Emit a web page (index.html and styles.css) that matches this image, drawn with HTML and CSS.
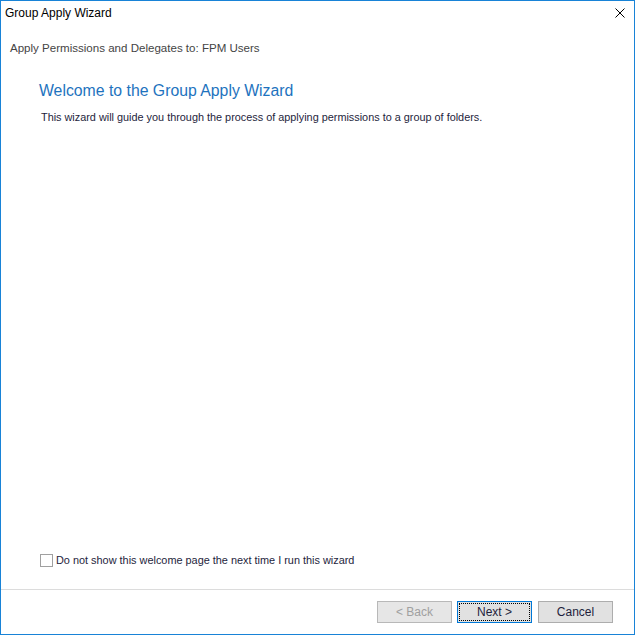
FILE: index.html
```html
<!DOCTYPE html>
<html>
<head>
<meta charset="utf-8">
<link rel="stylesheet" href="styles.css">
</head>
<body>
<div class="window">
  <div class="titlebar">
    <span class="title">Group Apply Wizard</span>
    <span class="close">
      <svg width="10" height="10" viewBox="0 0 10 10"><path d="M0.5 0.5 L9.5 9.5 M9.5 0.5 L0.5 9.5" stroke="#000" stroke-width="1" fill="none"/></svg>
    </span>
  </div>
  <div class="header">Apply Permissions and Delegates to: FPM Users</div>
  <div class="content">
    <h1 class="heading">Welcome to the Group Apply Wizard</h1>
    <p class="intro">This wizard will guide you through the process of applying permissions to a group of folders.</p>
    <label class="check"><span class="box"></span><span class="check-label">Do not show this welcome page the next time I run this wizard</span></label>
  </div>
  <div class="footer">
    <button class="btn disabled">&lt; Back</button>
    <button class="btn default"><span class="focus">Next &gt;</span></button>
    <button class="btn">Cancel</button>
  </div>
</div>
</body>
</html>
```
FILE: styles.css
```css
html, body {
  margin: 0;
  padding: 0;
  background: #fff;
}
body {
  font-family: "Liberation Sans", Arial, sans-serif;
  font-size: 12px;
}
.window {
  width: 635px;
  height: 635px;
  box-sizing: border-box;
  border: 1px solid #1883d7;
  display: flex;
  flex-direction: column;
  background: #fff;
}
.titlebar {
  height: 24px;
  line-height: 24px;
  display: flex;
  justify-content: space-between;
  align-items: center;
  padding-left: 4px;
  padding-right: 9px;
  color: #000;
}
.close {
  display: flex;
  width: 10px;
  height: 10px;
}
.header {
  padding: 16px 0 0 9px;
  height: 40px;
  box-sizing: border-box;
  font-size: 11.55px;
  line-height: 14px;
  color: #444;
}
.content {
  flex: 1;
  display: flex;
  flex-direction: column;
  padding: 16px 0 22px 38px;
}
.heading {
  margin: 0;
  font-weight: normal;
  font-size: 15.8px;
  line-height: 20px;
  color: #1e73be;
}
.intro {
  margin: 10px 0 0 2px;
  font-size: 10.86px;
  line-height: 13px;
  color: #1e1e3c;
}
.check {
  margin-top: auto;
  margin-left: 1px;
  display: flex;
  align-items: center;
  gap: 3px;
  height: 13px;
}
.box {
  width: 13px;
  height: 13px;
  box-sizing: border-box;
  border: 1px solid #a0a0a0;
  background: #fff;
}
.check-label {
  font-size: 10.9px;
  line-height: 13px;
  color: #1e1e3c;
}
.footer {
  border-top: 1px solid #dcdcdc;
  height: 45px;
  box-sizing: border-box;
  display: flex;
  justify-content: flex-end;
  align-items: flex-start;
  padding: 11px 21px 0 0;
  gap: 5px;
}
.btn {
  width: 75px;
  height: 22px;
  box-sizing: border-box;
  border: 1px solid #adadad;
  background: #e1e1e1;
  font-family: "Liberation Sans", Arial, sans-serif;
  font-size: 12px;
  color: #1e1e3c;
  padding: 0;
  margin: 0;
  display: flex;
  align-items: stretch;
  justify-content: center;
}
.btn.disabled {
  background: #e6e6e6;
  border-color: #b8b8b8;
  color: #a0a0a0;
  align-items: center;
}
.btn:last-child {
  margin-left: 1px;
  align-items: center;
}
.btn.default {
  border-color: #0078d7;
  padding: 1px;
}
.focus {
  flex: 1;
  border: 1px dotted #000;
  display: flex;
  align-items: center;
  justify-content: center;
}
```
